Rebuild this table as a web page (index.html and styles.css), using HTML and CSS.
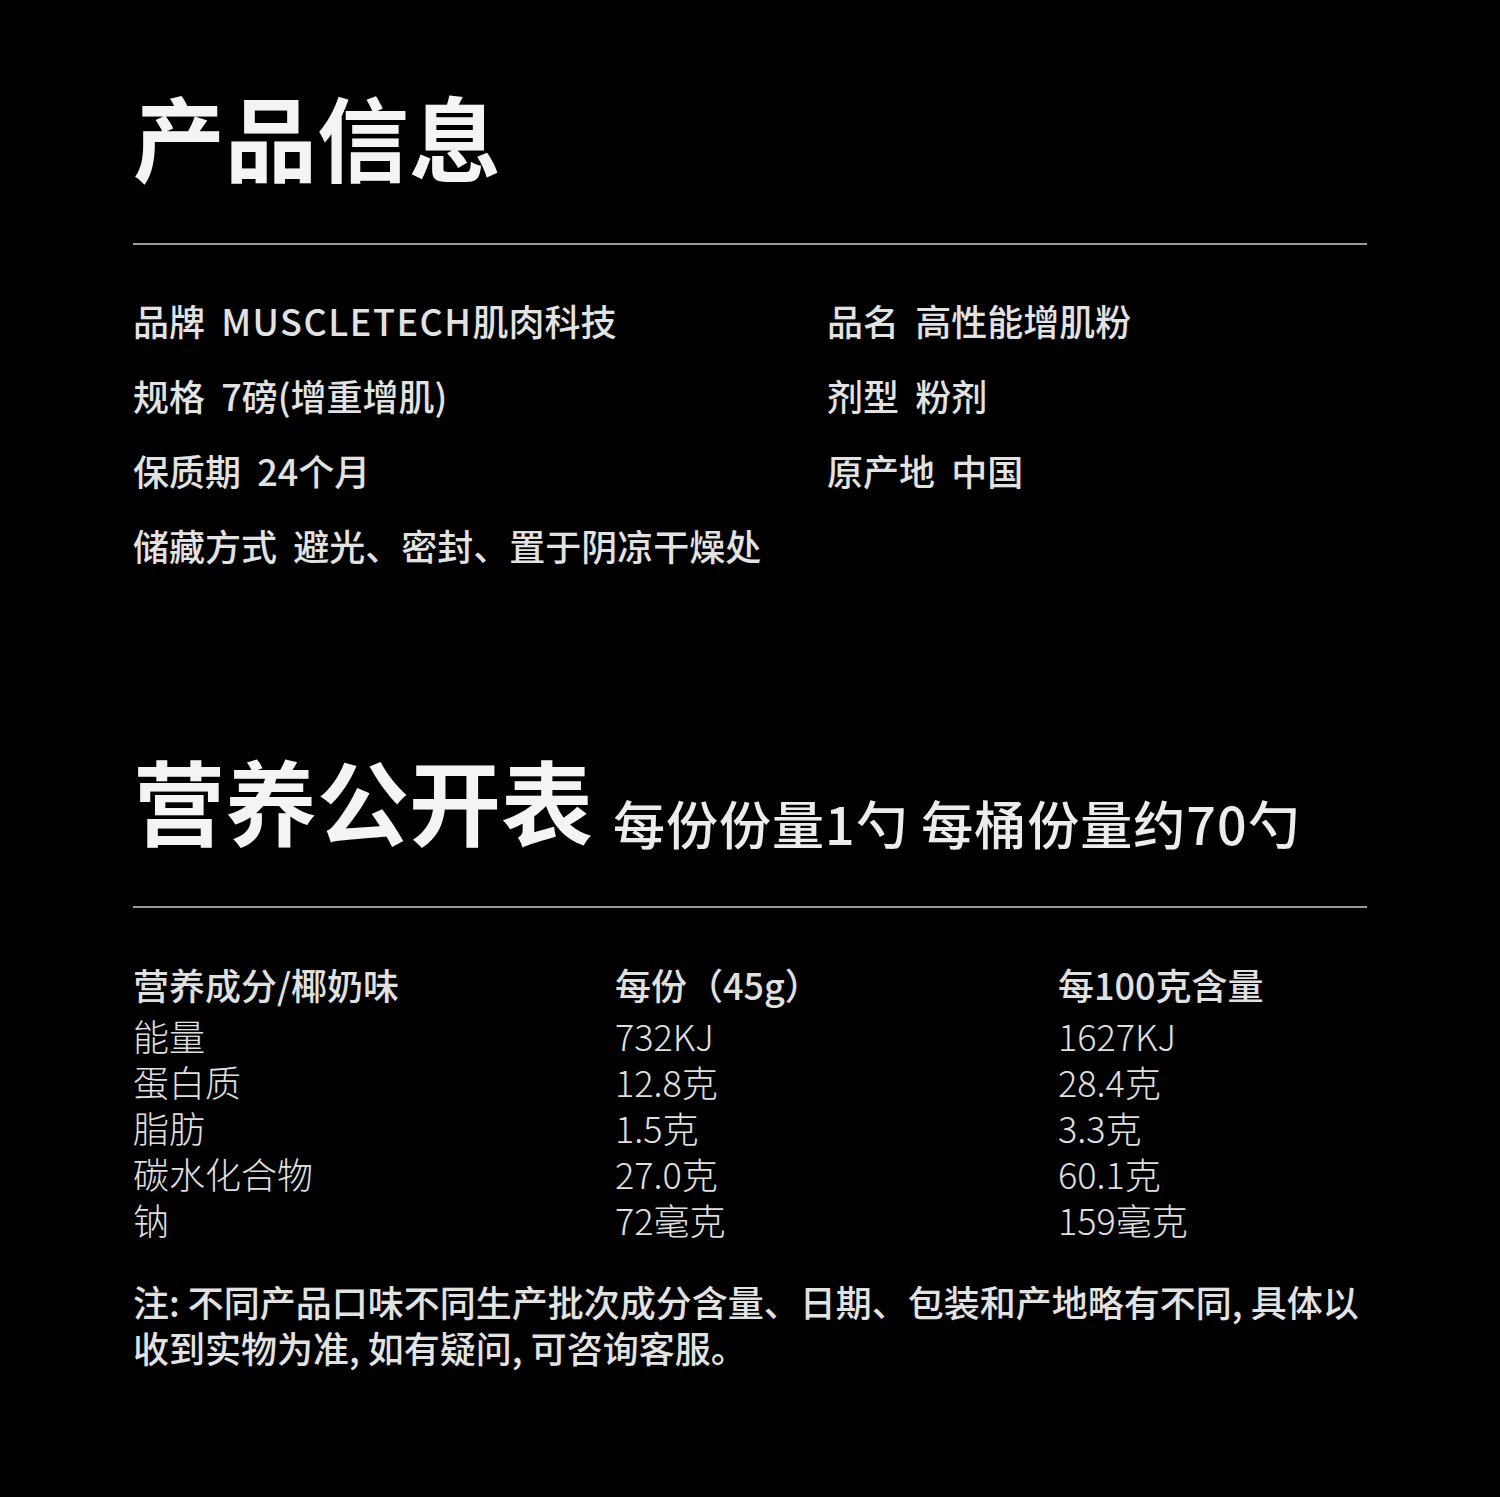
FILE: index.html
```html
<!DOCTYPE html>
<html lang="zh-CN">
<head>
<meta charset="utf-8">
<link rel="stylesheet" href="styles.css">
</head>
<body>
<main class="page">
  <section class="info">
    <h1 class="title">产品信息</h1>
    <hr class="rule">
    <div class="spec-grid">
      <div class="spec">品牌&nbsp;&nbsp;<span class="latin">MUSCLETECH</span>肌肉科技</div>
      <div class="spec">品名&nbsp;&nbsp;高性能增肌粉</div>
      <div class="spec">规格&nbsp;&nbsp;7磅(增重增肌)</div>
      <div class="spec">剂型&nbsp;&nbsp;粉剂</div>
      <div class="spec">保质期&nbsp;&nbsp;24个月</div>
      <div class="spec">原产地&nbsp;&nbsp;中国</div>
      <div class="spec wide">储藏方式&nbsp;&nbsp;避光、密封、置于阴凉干燥处</div>
    </div>
  </section>

  <section class="nutrition">
    <div class="nut-head">
      <h2 class="title">营养公开表</h2>
      <span class="subtitle">每份份量1勺&nbsp;每桶份量约70勺</span>
    </div>
    <hr class="rule">
    <div class="table">
      <div class="row head"><span>营养成分/椰奶味</span><span>每份（45g）</span><span>每100克含量</span></div>
      <div class="row"><span>能量</span><span>732KJ</span><span>1627KJ</span></div>
      <div class="row"><span>蛋白质</span><span>12.8克</span><span>28.4克</span></div>
      <div class="row"><span>脂肪</span><span>1.5克</span><span>3.3克</span></div>
      <div class="row"><span>碳水化合物</span><span>27.0克</span><span>60.1克</span></div>
      <div class="row"><span>钠</span><span>72毫克</span><span>159毫克</span></div>
    </div>
    <p class="note">注: 不同产品口味不同生产批次成分含量、日期、包装和产地略有不同, 具体以收到实物为准, 如有疑问, 可咨询客服。</p>
  </section>
</main>
</body>
</html>
```
FILE: styles.css
```css
html, body {
  margin: 0;
  padding: 0;
  background: #000;
}
body {
  font-family: "Noto Sans CJK SC", "Noto Sans", sans-serif;
  color: #e6e6e6;
}
.page {
  width: 1234px;
  padding: 0 0 0 133px;
}
.title {
  margin: 0;
  font-size: 92px;
  font-weight: 700;
  color: #f4f4f4;
  line-height: 1;
  letter-spacing: 0;
}
.info .title {
  padding-top: 89px;
}
.rule {
  border: 0;
  height: 2px;
  background: #9a9a9a;
  margin: 0;
}
.info .rule {
  margin-top: 62px;
}
.spec-grid {
  display: grid;
  grid-template-columns: 694px 1fr;
  row-gap: 23px;
  margin-top: 49px;
}
.spec {
  font-size: 36px;
  line-height: 52px;
  font-weight: 500;
  color: #e2e2e2;
}
.spec .latin {
  letter-spacing: 1.5px;
}
.spec.wide {
  grid-column: 1 / 3;
}
.nutrition {
  padding-top: 182px;
}
.nut-head {
  display: flex;
  align-items: flex-end;
  gap: 20px;
}
.subtitle {
  font-size: 52px;
  line-height: 1;
  font-weight: 500;
  letter-spacing: 1px;
  color: #ececec;
  margin-bottom: -4px;
}
.nutrition .rule {
  margin-top: 61px;
}
.table {
  margin-top: 50px;
}
.row {
  display: grid;
  grid-template-columns: 482px 443px 1fr;
  font-size: 36px;
  line-height: 46px;
  font-weight: 300;
  color: #e0e0e0;
}
.row.head {
  font-weight: 500;
  line-height: 52px;
  margin-bottom: 2px;
}
.note {
  margin: 36px 0 0;
  font-size: 36px;
  line-height: 46px;
  font-weight: 500;
  color: #e2e2e2;
}
```
